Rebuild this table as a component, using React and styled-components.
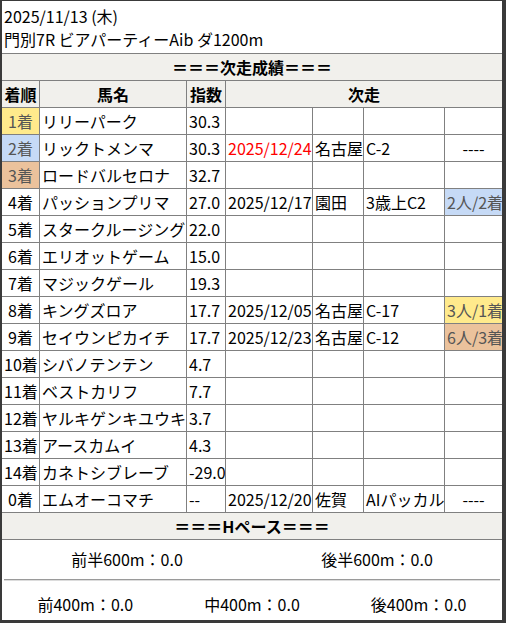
import React from 'react'
import styled, { createGlobalStyle } from 'styled-components'

const GlobalStyle = createGlobalStyle`
  html, body {
    margin: 0;
    padding: 0;
    background: #fff;
  }
  body {
    font-family: "Noto Sans CJK JP", "Noto Sans", sans-serif;
    color: #000;
  }
`

const Frame = styled.div`
  box-sizing: border-box;
  width: 506px;
  height: 623px;
  border-style: solid;
  border-color: #3a3a3a;
  border-width: 1px 4px 3px 2px;
  background: #fff;
  font-size: 16px;
  display: flex;
  flex-direction: column;
`

const Title = styled.div`
  box-sizing: border-box;
  height: 53px;
  padding: 4px 0 0 2px;
  line-height: 23px;
  border-bottom: 1px solid #808080;
`

const Grid = styled.div`
  display: grid;
  grid-template-columns: 38px 147px 39px 87px 51px 81px 57px;
  grid-auto-rows: 27px;
`

const Cell = styled.div`
  box-sizing: border-box;
  border-bottom: 1px solid #808080;
  border-right: ${p => (p.$last ? 'none' : '1px solid #808080')};
  padding: 0 2px;
  line-height: 26px;
  white-space: nowrap;
  overflow: hidden;
  text-align: ${p => p.$align || 'left'};
  background: ${p => p.$bg || 'transparent'};
  color: ${p => p.$color || '#000'};
  grid-column: ${p => p.$span || 'auto'};
  font-weight: ${p => (p.$bold ? 700 : 400)};
`

const Band = styled.div`
  box-sizing: border-box;
  grid-column: 1 / -1;
  height: 27px;
  line-height: 26px;
  text-align: center;
  font-weight: 700;
  background: #f1f0ec;
  border-bottom: 1px solid #808080;
`

const HeadCell = styled(Cell)`
  background: #f1f0ec;
  font-weight: 700;
  text-align: center;
`

const PaceRow = styled.div`
  display: grid;
  grid-template-columns: repeat(${p => p.$cols}, 1fr);
  height: ${p => p.$h}px;
  align-items: center;
  padding-top: ${p => p.$pt || 0}px;
  box-sizing: border-box;
  text-align: center;
`

const Divider = styled.div`
  height: 1px;
  margin: 0 2px;
  background: #9a9a9a;
  box-shadow: 0 1px 0 #dcdcdc;
`

const rankColors = {
  1: '#ffea8c',
  2: '#c6daf6',
  3: '#ebc29c',
}

const dimText = '#555'

const horses = [
  { rank: 1, name: 'リリーパーク', idx: '30.3' },
  { rank: 2, name: 'リックトメンマ', idx: '30.3', date: '2025/12/24', red: true, place: '名古屋', cls: 'C-2', res: '----' },
  { rank: 3, name: 'ロードバルセロナ', idx: '32.7' },
  { rank: 4, name: 'パッションプリマ', idx: '27.0', date: '2025/12/17', place: '園田', cls: '3歳上C2', res: '2人/2着', resBg: 2 },
  { rank: 5, name: 'スタークルージング', idx: '22.0' },
  { rank: 6, name: 'エリオットゲーム', idx: '15.0' },
  { rank: 7, name: 'マジックゲール', idx: '19.3' },
  { rank: 8, name: 'キングズロア', idx: '17.7', date: '2025/12/05', place: '名古屋', cls: 'C-17', res: '3人/1着', resBg: 1 },
  { rank: 9, name: 'セイウンピカイチ', idx: '17.7', date: '2025/12/23', place: '名古屋', cls: 'C-12', res: '6人/3着', resBg: 3 },
  { rank: 10, name: 'シバノテンテン', idx: '4.7' },
  { rank: 11, name: 'ベストカリフ', idx: '7.7' },
  { rank: 12, name: 'ヤルキゲンキユウキ', idx: '3.7' },
  { rank: 13, name: 'アースカムイ', idx: '4.3' },
  { rank: 14, name: 'カネトシブレーブ', idx: '-29.0' },
  { rank: 0, name: 'エムオーコマチ', idx: '--', date: '2025/12/20', place: '佐賀', cls: 'AIパッカル', res: '----' },
]

function HorseRow({ h }) {
  const rankBg = rankColors[h.rank]
  const resBg = h.resBg ? rankColors[h.resBg] : null
  return (
    <>
      <Cell $align="center" $bg={rankBg} $color={rankBg ? dimText : '#000'}>{h.rank}着</Cell>
      <Cell>{h.name}</Cell>
      <Cell>{h.idx}</Cell>
      <Cell $color={h.red ? '#ff0000' : '#000'}>{h.date}</Cell>
      <Cell>{h.place}</Cell>
      <Cell>{h.cls}</Cell>
      <Cell $last $bg={resBg} $color={resBg ? dimText : '#000'} $align={resBg ? 'left' : 'center'}>
        {h.res}
      </Cell>
    </>
  )
}

export default function App() {
  return (
    <>
      <GlobalStyle />
      <Frame>
        <Title>
          <div>2025/11/13 (木)</div>
          <div>門別7R ビアパーティーAib ダ1200m</div>
        </Title>
        <Grid>
          <Band>＝＝＝次走成績＝＝＝</Band>
          <HeadCell>着順</HeadCell>
          <HeadCell>馬名</HeadCell>
          <HeadCell>指数</HeadCell>
          <HeadCell $span="span 4" $last>次走</HeadCell>
          {horses.map(h => (
            <HorseRow key={h.rank} h={h} />
          ))}
          <Band>＝＝＝Hペース＝＝＝</Band>
        </Grid>
        <PaceRow $cols={2} $h={40}>
          <span>前半600m：0.0</span>
          <span>後半600m：0.0</span>
        </PaceRow>
        <Divider />
        <PaceRow $cols={3} $h={40} $pt={8}>
          <span>前400m：0.0</span>
          <span>中400m：0.0</span>
          <span>後400m：0.0</span>
        </PaceRow>
      </Frame>
    </>
  )
}
